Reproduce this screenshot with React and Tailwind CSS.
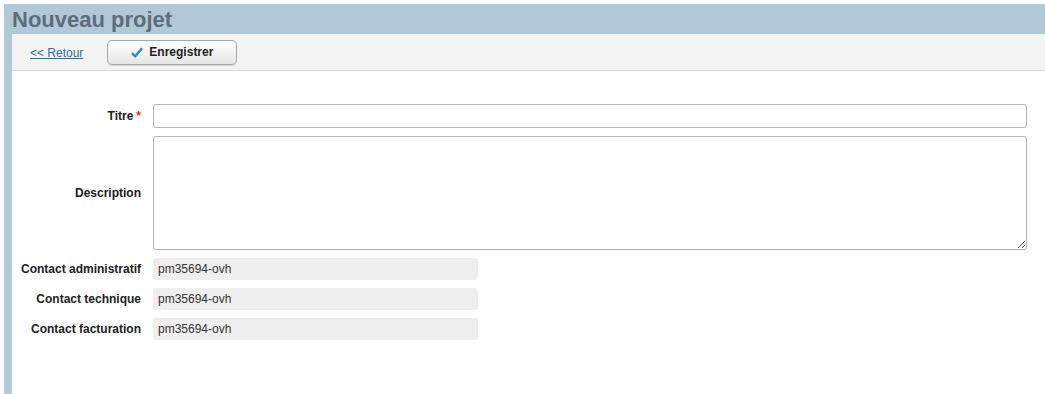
// App.jsx — Formulaire "Nouveau projet"

const CONTACTS = [
  { rotulo: 'Contact administratif', valor: 'pm35694-ovh' },
  { rotulo: 'Contact technique', valor: 'pm35694-ovh' },
  { rotulo: 'Contact facturation', valor: 'pm35694-ovh' },
];

function Check() {
  return (
    <svg width="12" height="11" viewBox="0 0 12 11" className="flex-shrink-0">
      <path d="M1 6.2 L4.2 9.4 L11 1.2" fill="none" stroke="#2a8ad8" strokeWidth="2.4" strokeLinejoin="round" />
    </svg>
  );
}

export default function App() {
  return (
    <div
      className="w-[1045px] h-[394px] bg-white pt-[4px] pl-[4px] overflow-hidden text-[#222]"
      style={{ fontFamily: '"Liberation Sans", Arial, sans-serif' }}
    >
      <div className="flex flex-col h-full bg-[#b1c8d6] pl-[8px]">
        {/* Cabeçalho */}
        <div className="h-[30px] flex items-center">
          <h1 className="text-[22px] font-bold text-[#5d6d79] leading-none pt-[2px]">Nouveau projet</h1>
        </div>

        <div className="flex-1 bg-white flex flex-col">
          {/* Barra de ferramentas */}
          <div className="h-[37px] bg-[#f3f3f3] border-b border-[#d8d8d8] flex items-center pl-[18px] gap-[24px]">
            <a href="#" className="text-[12px] text-[#2a6fb8] underline pt-[1px]">&lt;&lt; Retour</a>
            <button className="w-[130px] h-[25px] rounded-[5px] border border-[#a9a9a9] bg-gradient-to-b from-white to-[#e6e6e6] flex items-center justify-center gap-[6px] text-[12px] font-bold text-[#222] shadow-[0_1px_1px_rgba(0,0,0,0.15)]">
              <Check />
              <span>Enregistrer</span>
            </button>
          </div>

          {/* Formulário */}
          <div className="pt-[33px] pr-[18px] flex flex-col">
            <div className="flex items-center h-[24px]">
              <label className="w-[129px] text-right text-[12px] font-bold">
                Titre<span className="text-[#e0302a] ml-[3px]">*</span>
              </label>
              <input className="ml-[12px] flex-1 h-[24px] border border-[#b5b5b5] rounded-[3px] outline-none px-1 text-[12px]" />
            </div>

            <div className="flex items-center h-[114px] mt-[8px]">
              <label className="w-[129px] text-right text-[12px] font-bold">Description</label>
              <textarea className="ml-[12px] flex-1 h-[114px] border border-[#b5b5b5] rounded-[3px] outline-none px-1 text-[12px] resize-y" />
            </div>

            <div className="flex flex-col gap-[8px] mt-[8px]">
              {CONTACTS.map(({ rotulo, valor }) => (
                <div key={rotulo} className="flex items-center h-[22px]">
                  <span className="w-[129px] text-right text-[12px] font-bold whitespace-nowrap">{rotulo}</span>
                  <div className="ml-[12px] w-[325px] h-[22px] rounded-[3px] bg-[#eeeeee] flex items-center pl-[5px] text-[12px] text-[#333]">
                    {valor}
                  </div>
                </div>
              ))}
            </div>
          </div>
        </div>
      </div>
    </div>
  );
}
